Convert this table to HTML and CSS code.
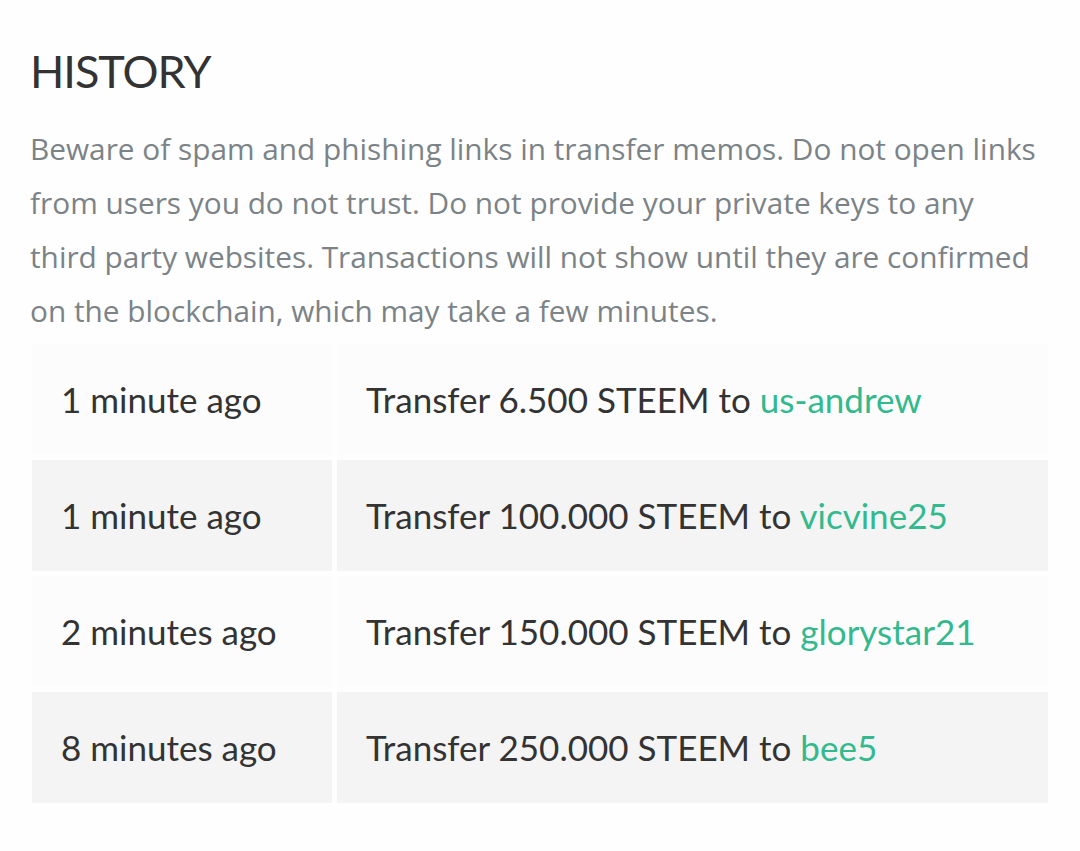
FILE: index.html
```html
<!DOCTYPE html>
<html>
<head>
  <link rel="stylesheet" href="styles.css">
</head>
<body>
  <div class="history">
    <h2>HISTORY</h2>
    <p class="notice">Beware of spam and phishing links in transfer memos. Do not open links from users you do not trust. Do not provide your private keys to any third party websites. Transactions will not show until they are confirmed on the blockchain, which may take a few minutes.</p>

    <table class="transfers">
      <tbody>
        <tr>
          <td class="when">1 minute ago</td>
          <td class="what">Transfer 6.500 STEEM to <a href="#">us-andrew</a></td>
        </tr>
        <tr>
          <td class="when">1 minute ago</td>
          <td class="what">Transfer 100.000 STEEM to <a href="#">vicvine25</a></td>
        </tr>
        <tr>
          <td class="when">2 minutes ago</td>
          <td class="what">Transfer 150.000 STEEM to <a href="#">glorystar21</a></td>
        </tr>
        <tr>
          <td class="when">8 minutes ago</td>
          <td class="what">Transfer 250.000 STEEM to <a href="#">bee5</a></td>
        </tr>
      </tbody>
    </table>
  </div>
</body>
</html>
```

FILE: styles.css
```css
body {
  margin: 0;
  background-color: #fefefe;
  font-family: Lato, 'Noto Sans', sans-serif;
  color: #333;
}
.history {
  padding: 43px 32px 0 30px;
}
h2 {
  font-size: 45px;
  font-weight: 400;
  letter-spacing: -1px;
  line-height: 57px;
  margin: 0 0 22px;
  color: #333;
}
.notice {
  font-family: 'Open Sans', Lato, sans-serif;
  font-size: 29.8px;
  line-height: 54px;
  color: #7b8387;
  margin: 0 0 1px;
}
.transfers {
  width: calc(100% + 8px);
  margin-left: -3px;
  border-collapse: separate;
  border-spacing: 5px;
}
.transfers tr {
  height: 111px;
}
.transfers tr:nth-child(odd) td {
  background-color: #fcfcfc;
}
.transfers tr:nth-child(even) td {
  background-color: #f4f4f4;
}
.transfers td {
  padding: 0 0 2px 29px;
  font-size: 35px;
  color: #333;
  vertical-align: middle;
}
.transfers .when {
  width: 271px;
}
.transfers a {
  color: #33b98e;
  text-decoration: none;
}
```
